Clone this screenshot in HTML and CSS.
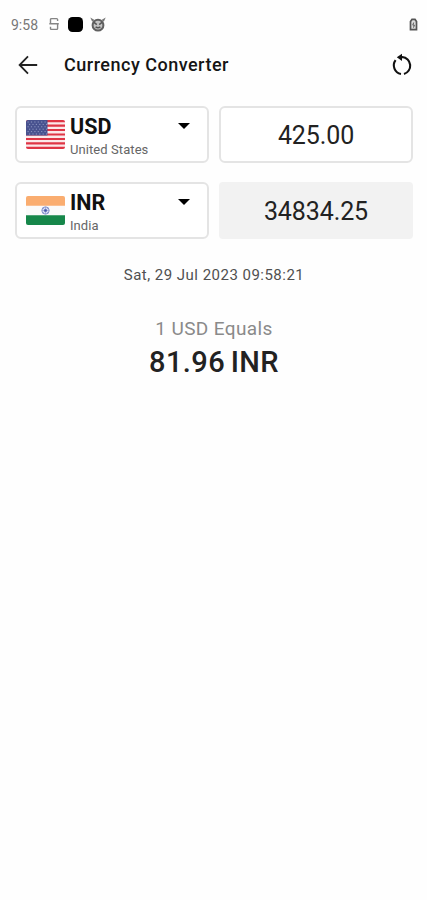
FILE: index.html
```html
<!DOCTYPE html>
<html lang="en">
<head>
<meta charset="utf-8">
<title>Currency Converter</title>
<link rel="stylesheet" href="styles.css">
</head>
<body>
<div class="status">
  <span class="clock">9:58</span>
  <svg class="s-icon" width="10" height="14" viewBox="0 0 10 14"><path d="M8.6 4V2.6Q8.6 1.6 7.6 1.6H2.6Q1.5 1.6 1.5 2.6V6.8H8.6V11.4Q8.6 12.4 7.6 12.4H2.6Q1.5 12.4 1.5 11.4V9.8M.3 6.8H9.8" fill="none" stroke="#858585" stroke-width="1.4"/></svg>
  <span class="blob"></span>
  <svg class="cat" width="16" height="15" viewBox="0 0 16 15"><path d="M.3 .5L2.2 4.8L4.6 3ZM15.7 .5L13.8 4.8L11.4 3Z" fill="#777"/><circle cx="8" cy="8.2" r="5.4" fill="#c4c4c4" stroke="#606060" stroke-width="2"/><path d="M4 5.4L6.8 7.6M12 5.4L9.2 7.6M5.6 9.8Q8 11.6 10.4 9.8" fill="none" stroke="#555" stroke-width="1.5"/></svg>
  <svg class="battery" width="9" height="13" viewBox="0 0 9 13"><path d="M1.5 11.6V3.6L3 1.4H6L7.5 3.6V11.6Z" fill="#ddd" stroke="#555" stroke-width="1.7"/><path d="M4.7 4.5L3.8 7.1H5.4L4.5 9.6" fill="none" stroke="#555" stroke-width="1"/></svg>
</div>
<header class="bar">
  <svg class="back" width="20" height="20" viewBox="0 0 20 20"><path d="M19.2 10H2M10 1.3L1.6 10L10 18.7" fill="none" stroke="#222" stroke-width="1.8"/></svg>
  <h1>Currency Converter</h1>
  <svg class="refresh" width="22" height="24" viewBox="0 0 22 24"><path d="M9 4.4Q10 4 11.3 4A8.7 8.7 0 0 1 13 21M10 21A8.7 8.7 0 0 1 4.6 7.2" fill="none" stroke="#111" stroke-width="2.1"/><path d="M5.8 4.3L11 .8V7.9Z" fill="#111"/></svg>
</header>
<main>
  <div class="row">
    <div class="box pick">
      <svg class="flag" width="39" height="29" viewBox="0 0 39 29">
        <path fill="#fbe9ea" d="M0 0H39V29H0Z"/>
        <path d="M0 1.1H39M0 5.6H39M0 10H39M0 14.5H39M0 19H39M0 23.4H39M0 27.9H39" stroke="#df3545" stroke-width="2.2"/>
        <path fill="#48528f" d="M0 0H21.5V15.6H0Z"/>
        <path d="M1.5 2H21M3 4.4H21M1.5 6.8H21M3 9.2H21M1.5 11.6H21M3 14H21" stroke="#8f97c2" stroke-width="1" stroke-dasharray="1.2 2.2"/>
      </svg>
      <div class="names"><b>USD</b><span>United States</span></div>
      <i class="caret"></i>
    </div>
    <div class="box amount"><span>425.00</span></div>
  </div>
  <div class="row">
    <div class="box pick">
      <svg class="flag" width="39" height="29" viewBox="0 0 39 29">
        <path fill="#fafafa" d="M0 0H39V29H0Z"/>
        <path fill="#faad70" d="M0 0H39V9.7H0Z"/>
        <path fill="#16874a" d="M0 19.3H39V29H0Z"/>
        <circle cx="19.5" cy="14.5" r="3.7" fill="#dfe3f5" stroke="#8592cc" stroke-width="1"/>
        <path d="M19.5 11V18M16 14.5H23M17 12L22 17M22 12L17 17" stroke="#7d8cca" stroke-width=".6"/>
        <circle cx="19.5" cy="14.5" r="1.3" fill="#4054a8"/>
      </svg>
      <div class="names"><b>INR</b><span>India</span></div>
      <i class="caret"></i>
    </div>
    <div class="box amount result"><span>34834.25</span></div>
  </div>
  <p class="date"><span>Sat, 29 Jul 2023 09:58:21</span></p>
  <p class="equals"><span>1 USD Equals</span></p>
  <p class="rate"><span>81.96 INR</span></p>
</main>
</body>
</html>
```
FILE: styles.css
```css
* { box-sizing: border-box; }
body { margin: 0; background: #fefefe; color: #222; font-family: Roboto, sans-serif; }
.status { display: flex; align-items: center; height: 48px; padding: 0 9px 0 11px; }
.clock { width: 28px; font-size: 14px; line-height: 16px; color: #777; margin-right: 10px; padding-top: 1px; }
.blob { width: 15px; height: 15px; border-radius: 4.5px; background: #000; margin: 0 7px 0 9px; }
.battery { margin-left: auto; }
.bar { display: flex; align-items: center; height: 34px; padding: 0 14px 0 18px; }
h1 { margin: 0 auto 0 26px; font-size: 18px; line-height: 24px; font-weight: 500; letter-spacing: .5px; color: #151515; }
main { padding: 24px 14px 0 15px; }
.row { display: grid; grid-template-columns: 194px 194px; gap: 10px; margin-bottom: 19px; }
.box { height: 57px; border: 2px solid #e4e4e4; border-radius: 6px; background: #fff; display: flex; }
.pick { padding: 0 17px 0 9px; }
.flag { margin-top: 12px; border-radius: 2px; }
.names { margin: 6px 0 0 5px; display: flex; flex-direction: column; flex: 1; min-width: 0; }
.names b { font-size: 21.5px; line-height: 26px; font-weight: 700; color: #111; }
.names span { font-size: 13px; line-height: 16px; margin-top: 2px; letter-spacing: .08px; color: #666; white-space: nowrap; }
.caret { width: 0; height: 0; margin-top: 15px; border: 6px solid transparent; border-top-color: #000; border-bottom: 0; }
.amount { align-items: center; justify-content: center; font-size: 25px; padding-top: 2px; letter-spacing: -.1px; }
.result { background: #f2f2f2; border-color: #f2f2f2; border-radius: 4px; }
p { margin: 0; text-align: center; }
.date { font-size: 15px; line-height: 20px; margin-top: 26px; letter-spacing: .48px; color: #505050; }
.equals { font-size: 19px; line-height: 24px; margin-top: 32px; letter-spacing: .38px; color: #8a8a8a; }
.rate { font-size: 29px; line-height: 36px; margin-top: 3px; font-weight: 500; letter-spacing: .4px; word-spacing: -2px; color: #222; }
```
